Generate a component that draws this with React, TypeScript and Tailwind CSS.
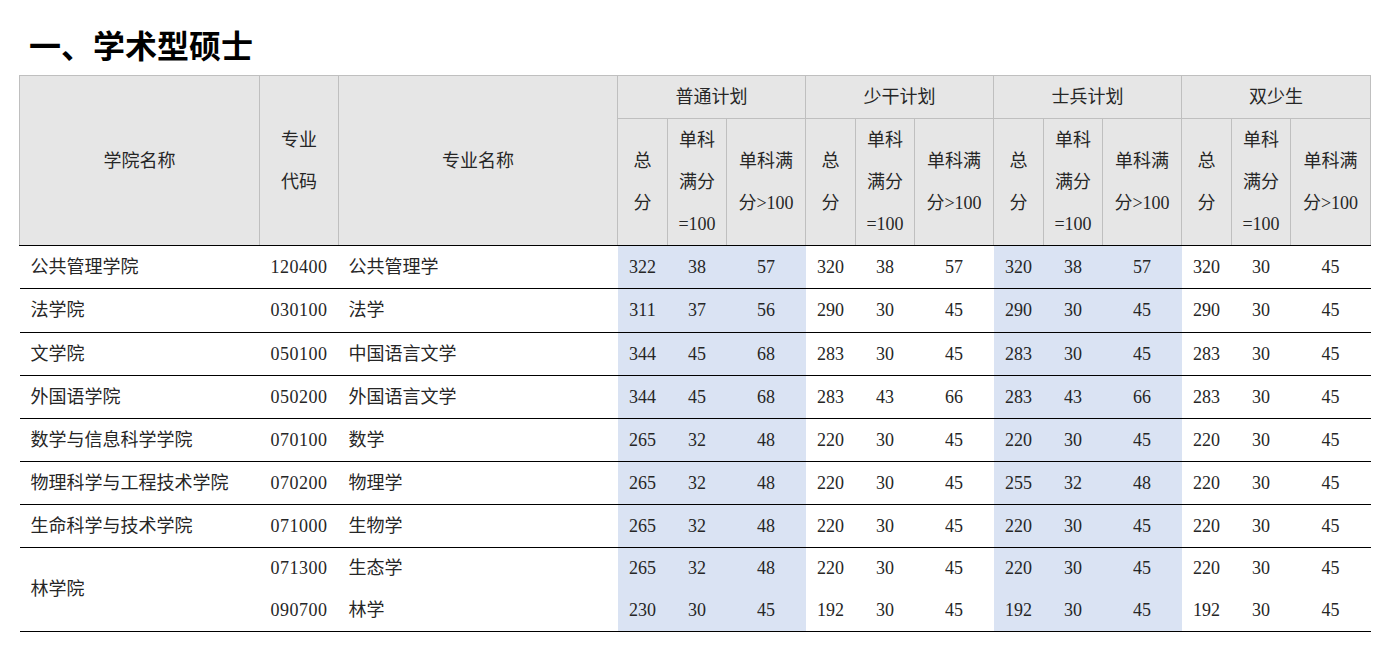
const groups = ["普通计划", "少干计划", "士兵计划", "双少生"];

type Row = {
  college?: string;
  span?: number;
  code: string;
  major: string;
  scores: string[];
  last?: boolean;
};

const rows: Row[] = [
  { college: "公共管理学院", code: "120400", major: "公共管理学", scores: ["322", "38", "57", "320", "38", "57", "320", "38", "57", "320", "30", "45"] },
  { college: "法学院", code: "030100", major: "法学", scores: ["311", "37", "56", "290", "30", "45", "290", "30", "45", "290", "30", "45"] },
  { college: "文学院", code: "050100", major: "中国语言文学", scores: ["344", "45", "68", "283", "30", "45", "283", "30", "45", "283", "30", "45"] },
  { college: "外国语学院", code: "050200", major: "外国语言文学", scores: ["344", "45", "68", "283", "43", "66", "283", "43", "66", "283", "30", "45"] },
  { college: "数学与信息科学学院", code: "070100", major: "数学", scores: ["265", "32", "48", "220", "30", "45", "220", "30", "45", "220", "30", "45"] },
  { college: "物理科学与工程技术学院", code: "070200", major: "物理学", scores: ["265", "32", "48", "220", "30", "45", "255", "32", "48", "220", "30", "45"] },
  { college: "生命科学与技术学院", code: "071000", major: "生物学", scores: ["265", "32", "48", "220", "30", "45", "220", "30", "45", "220", "30", "45"] },
  { college: "林学院", span: 2, code: "071300", major: "生态学", scores: ["265", "32", "48", "220", "30", "45", "220", "30", "45", "220", "30", "45"] },
  { code: "090700", major: "林学", scores: ["230", "30", "45", "192", "30", "45", "192", "30", "45", "192", "30", "45"], last: true },
];

const widths = ["w-[240px]", "w-[79px]", "w-[279px]", "w-[50px]", "w-[59px]", "w-[79px]", "w-[50px]", "w-[59px]", "w-[79px]", "w-[50px]", "w-[59px]", "w-[79px]", "w-[50px]", "w-[59px]", "w-[80px]"];

const th = "border border-[#bfbfbf] bg-[#e6e6e6] font-normal text-center align-middle leading-[42px]";

export default function App() {
  return (
    <div
      className="min-h-screen bg-white px-[19px] text-[#262626]"
      style={{ fontFamily: '"Liberation Serif", "Noto Sans CJK SC", serif' }}
    >
      <h1 className="ml-[10px] pt-[27px] mb-[8px] text-[32px] leading-[40px] font-bold text-black">
        一、学术型硕士
      </h1>
      <table className="table-fixed border-collapse w-[1351px] text-[18px]">
        <colgroup>
          {widths.map((w, i) => (
            <col key={i} className={w} />
          ))}
        </colgroup>
        <thead>
          <tr className="h-[43px]">
            <th rowSpan={2} className={th + " border-b-black"}>学院名称</th>
            <th rowSpan={2} className={th + " border-b-black"}>专业<br />代码</th>
            <th rowSpan={2} className={th + " border-b-black"}>专业名称</th>
            {groups.map((g) => (
              <th key={g} colSpan={3} className={th}>{g}</th>
            ))}
          </tr>
          <tr className="h-[126px]">
            {groups.map((g) => [
              <th key={g + "a"} className={th + " border-b-black"}>总<br />分</th>,
              <th key={g + "b"} className={th + " border-b-black"}>单科<br />满分<br />=100</th>,
              <th key={g + "c"} className={th + " border-b-black"}>单科满<br />分&gt;100</th>,
            ])}
          </tr>
        </thead>
        <tbody>
          {rows.map((r, i) => {
            const line = r.span ? "" : "border-b border-black";
            const h = r.span || r.last ? "h-[42px]" : i === 1 ? "h-[44px]" : "h-[43px]";
            return (
              <tr key={i} className={h}>
                {r.college && (
                  <td rowSpan={r.span} className="border-b border-black pl-[11px] align-middle">
                    {r.college}
                  </td>
                )}
                <td className={line + " text-center tracking-[0.5px]"}>{r.code}</td>
                <td className={line + " pl-[10px]"}>{r.major}</td>
                {r.scores.map((s, j) => {
                  const g = Math.floor(j / 3);
                  const bg = g === 0 || g === 2 ? "bg-[#dae3f3]" : "";
                  return (
                    <td key={j} className={line + " text-center " + bg}>
                      {s}
                    </td>
                  );
                })}
              </tr>
            );
          })}
        </tbody>
      </table>
    </div>
  );
}
